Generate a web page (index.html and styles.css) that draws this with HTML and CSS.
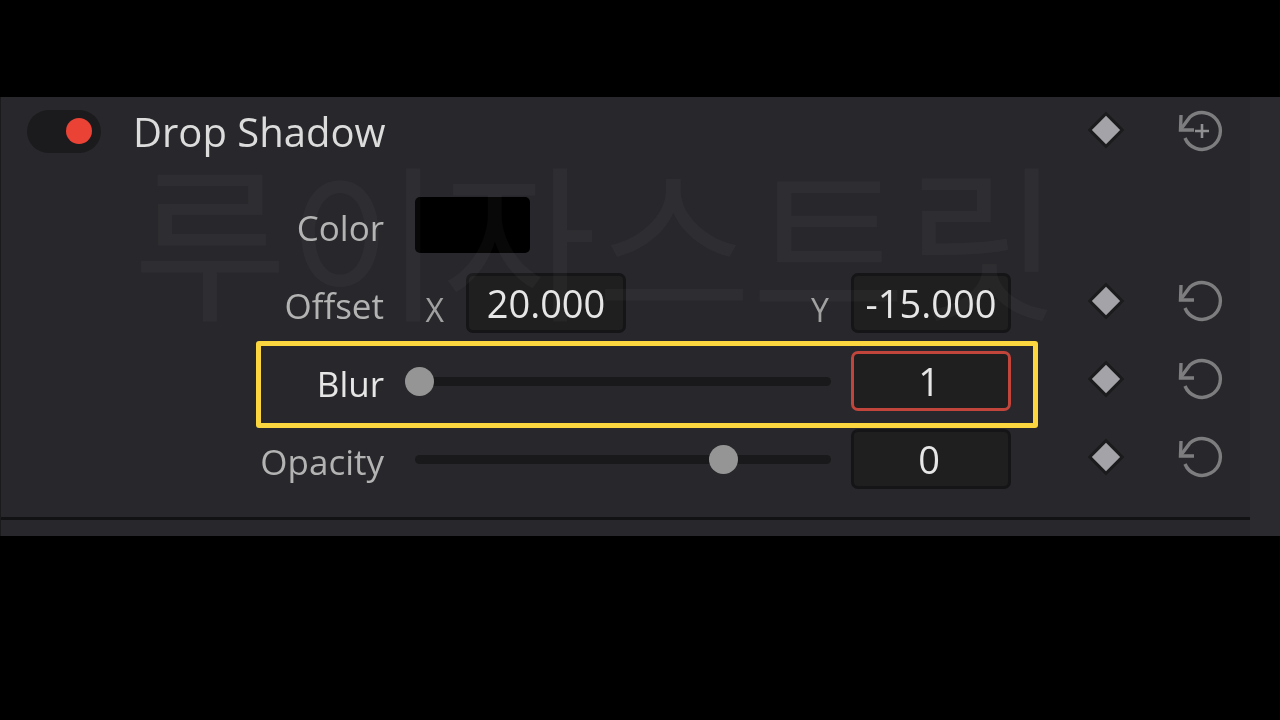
FILE: index.html
```html
<!DOCTYPE html>
<html lang="ko">
<head>
<meta charset="utf-8">
<title>Drop Shadow</title>
<link rel="stylesheet" href="styles.css">
</head>
<body>
<main class="panel">
  <div class="watermark" aria-hidden="true">루이자스트릿</div>
  <header class="head">
    <span class="toggle"><span class="toggle-dot"></span></span>
    <h1 class="title">Drop Shadow</h1>
    <span class="key"></span>
    <svg class="reset" viewBox="0 0 48 48"><path d="M7 31A18.4 18.4 0 1 0 12 10L3 22"/><path d="M3 8L2.5 23H16"/><path class="thin" d="M24 17V31M17 24H31"/></svg>
  </header>
  <section class="row">
    <div class="label">Color</div>
    <div class="control"><div class="swatch"></div></div>
    <span class="spacer"></span>
  </section>
  <section class="row">
    <div class="label">Offset</div>
    <div class="control split">
      <div class="pair"><span class="axis">X</span><div class="value">20.000</div></div>
      <div class="pair"><span class="axis">Y</span><div class="value">-15.000</div></div>
    </div>
    <span class="key"></span>
    <svg class="reset" viewBox="0 0 48 48"><path d="M7 31A18.4 18.4 0 1 0 12 10L3 22"/><path d="M3 8L2.5 23H16"/></svg>
  </section>
  <section class="row">
    <div class="label bright">Blur</div>
    <div class="control">
      <div class="slider"><span class="knob knob-min"></span></div>
      <div class="value active">1</div>
    </div>
    <span class="key"></span>
    <svg class="reset" viewBox="0 0 48 48"><path d="M7 31A18.4 18.4 0 1 0 12 10L3 22"/><path d="M3 8L2.5 23H16"/></svg>
    <div class="highlight"></div>
  </section>
  <section class="row">
    <div class="label">Opacity</div>
    <div class="control">
      <div class="slider"><span class="knob knob-mid"></span></div>
      <div class="value">0</div>
    </div>
    <span class="key"></span>
    <svg class="reset" viewBox="0 0 48 48"><path d="M7 31A18.4 18.4 0 1 0 12 10L3 22"/><path d="M3 8L2.5 23H16"/></svg>
  </section>
  <div class="rule"></div>
</main>
</body>
</html>
```
FILE: styles.css
```css
* { box-sizing: border-box; }
html, body { margin: 0; height: 100%; background: #000; overflow: hidden; }
body { padding-top: 97px; font-family: "Open Sans", "Noto Sans", "Noto Sans CJK KR", sans-serif; }

.panel {
  position: relative;
  width: 1280px;
  height: 439px;
  background: linear-gradient(90deg, #28282c 1249px, #2a2a2f 1249px);
  border-left: 1px solid #1a1a1d;
  filter: blur(0.5px);
}

.watermark {
  position: absolute;
  left: 132px;
  top: 37px;
  font: 400 168px/1.2 "Noto Sans CJK KR", sans-serif;
  white-space: nowrap;
  color: rgba(255, 255, 255, 0.03);
  pointer-events: none;
  z-index: 2;
}

.head {
  display: flex;
  align-items: center;
  height: 70px;
  padding-left: 26px;
}
.toggle {
  display: flex;
  align-items: center;
  justify-content: flex-end;
  width: 74px;
  height: 43px;
  margin-top: -2px;
  padding-right: 9px;
  border-radius: 22px;
  background: #1b1b1d;
}
.toggle-dot { width: 26px; height: 26px; border-radius: 50%; background: #ea4335; }
.title {
  width: 963px;
  margin: 0 0 0 32px;
  font-size: 40px;
  font-weight: 400;
  line-height: 1;
  color: #dcdcdc;
}

.key {
  flex: none;
  width: 20px;
  height: 20px;
  margin-top: -4px;
  transform: rotate(45deg);
  background: #a4a4a8;
  box-shadow: 0 0 0 3px #1b1b1d;
}
.reset {
  flex: none;
  width: 48px;
  height: 48px;
  margin: -4px 0 0 62px;
  fill: none;
  stroke: #7d7d7f;
  stroke-width: 3.4;
}
.head .reset { margin-top: -2px; }
.reset .thin { stroke-width: 2.6; stroke: #909092; }

.row {
  position: relative;
  display: flex;
  align-items: center;
  height: 78px;
}
.head + .row { margin-top: 19px; }
.label {
  width: 383px;
  padding-top: 5px;
  text-align: right;
  font-size: 35px;
  line-height: 1;
  color: #b3b3b3;
}
.label.bright { color: #e6e6e6; }
.control {
  display: flex;
  align-items: center;
  justify-content: space-between;
  width: 596px;
  margin: 0 85px 0 31px;
}

.swatch { width: 115px; height: 56px; border-radius: 5px; background: #000; }
.pair { display: flex; align-items: center; }
.axis {
  width: 51px;
  padding: 14px 22px 0 0;
  text-align: right;
  font-size: 32px;
  line-height: 1;
  color: #a0a0a0;
}
.value {
  width: 160px;
  height: 60px;
  display: flex;
  align-items: center;
  justify-content: center;
  font-size: 38px;
  line-height: 1;
  color: #e6e6e6;
  background: #1f1f20;
  border: 3px solid #151517;
  border-radius: 7px;
}
.value.active { border-color: #c2453c; }
.slider + .value { padding-right: 4px; }

.slider {
  position: relative;
  width: 416px;
  height: 9px;
  border-radius: 5px;
  background: #19191b;
}
.knob {
  position: absolute;
  top: -10px;
  width: 29px;
  height: 29px;
  border-radius: 50%;
  background: #959595;
}
.knob-min { left: -10px; }
.knob-mid { left: 294px; }

.highlight {
  position: absolute;
  left: 255px;
  top: -1px;
  width: 782px;
  height: 87px;
  border: 5px solid #fbd63f;
  border-radius: 3px;
}
.spacer { flex: 1; }

.rule {
  width: 1249px;
  height: 3px;
  margin-top: 19px;
  background: #121214;
}
```
